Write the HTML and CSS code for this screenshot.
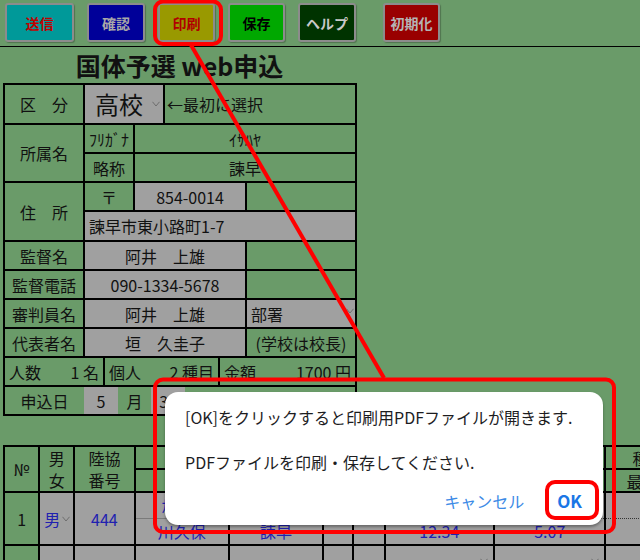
FILE: index.html
```html
<!DOCTYPE html>
<html lang="ja">
<head>
<meta charset="utf-8">
<title>国体予選 web申込</title>
<link rel="stylesheet" href="styles.css">
</head>
<body>
<div class="toolbar">
  <button class="btn btn-send">送信</button>
  <button class="btn btn-check">確認</button>
  <button class="btn btn-print">印刷</button>
  <button class="btn btn-save">保存</button>
  <button class="btn btn-help">ヘルプ</button>
  <button class="btn btn-reset">初期化</button>
</div>

<div class="form">
  <h1 class="title">国体予選 web申込</h1>
  <table class="info">
    <colgroup>
      <col class="w80"><col class="w20"><col class="w14"><col class="w16"><col class="w17"><col class="w13"><col class="w21"><col class="w34"><col class="w27"><col class="w110">
    </colgroup>
    <tr class="r-kubun">
      <th class="lbl">区　分</th>
      <td colspan="5" class="gray sel big">高校<svg class="chev" viewBox="0 0 8 6"><path d="M0.5 0.8 L4 5 L7.5 0.8"/></svg></td>
      <td colspan="4" class="note">←最初に選択</td>
    </tr>
    <tr>
      <th rowspan="2" class="lbl">所属名</th>
      <th colspan="3" class="lbl">ﾌﾘｶﾞﾅ</th>
      <td colspan="6" class="ctr">ｲｻﾊﾔ</td>
    </tr>
    <tr>
      <th colspan="3" class="lbl">略称</th>
      <td colspan="6" class="ctr">諫早</td>
    </tr>
    <tr>
      <th rowspan="2" class="lbl">住　所</th>
      <th colspan="3" class="lbl">〒</th>
      <td colspan="5" class="gray ctr">854-0014</td>
      <td></td>
    </tr>
    <tr class="r-addr">
      <td colspan="9" class="gray">諫早市東小路町1-7</td>
    </tr>
    <tr>
      <th class="lbl">監督名</th>
      <td colspan="8" class="gray ctr">阿井　上雄</td>
      <td></td>
    </tr>
    <tr>
      <th class="lbl">監督電話</th>
      <td colspan="8" class="gray ctr">090-1334-5678</td>
      <td></td>
    </tr>
    <tr>
      <th class="lbl">審判員名</th>
      <td colspan="8" class="gray ctr">阿井　上雄</td>
      <td class="gray sel">部署<svg class="chev chev-sm" viewBox="0 0 8 6"><path d="M0.5 0.8 L4 5 L7.5 0.8"/></svg></td>
    </tr>
    <tr>
      <th class="lbl">代表者名</th>
      <td colspan="8" class="gray ctr">垣　久圭子</td>
      <td class="ctr">(学校は校長)</td>
    </tr>
    <tr class="r-sum">
      <td colspan="2"><div class="pair"><span>人数</span><span>1 名</span></div></td>
      <td colspan="6"><div class="pair"><span>個人</span><span>2 種目</span></div></td>
      <td colspan="2"><div class="pair"><span>金額</span><span>1700 円</span></div></td>
    </tr>
    <tr class="r-date">
      <th class="lbl">申込日</th>
      <td colspan="2" class="gray ctr">5</td>
      <td colspan="2" class="ctr">月</td>
      <td colspan="2" class="gray ctr">30</td>
      <td class="ctr"></td>
      <td colspan="2"></td>
    </tr>
  </table>
</div>

<table class="entries">
  <colgroup>
    <col class="w35"><col class="w35"><col class="w60"><col class="w94"><col class="w94"><col class="w30"><col class="w31"><col class="w109"><col class="w111"><col class="w100">
  </colgroup>
  <tr class="h-top">
    <th rowspan="2">№</th>
    <th rowspan="2" class="two">男<br>女</th>
    <th rowspan="2" class="two">陸協<br>番号</th>
    <th colspan="2"></th>
    <th rowspan="2"></th>
    <th rowspan="2"></th>
    <th></th>
    <th></th>
    <th class="far">種目③</th>
  </tr>
  <tr class="h-bot">
    <th></th>
    <th></th>
    <th></th>
    <th></th>
    <th class="far2">最高記録</th>
  </tr>
  <tr class="row">
    <th class="no">1</th>
    <td class="gray blue sex">男<svg class="chev" viewBox="0 0 8 6"><path d="M0.5 0.8 L4 5 L7.5 0.8"/></svg></td>
    <td class="gray blue ctr">444</td>
    <td class="gray blue split"><div class="top">ｶﾜｸﾎﾞ</div><div class="bot">川久保</div></td>
    <td class="gray blue split team"><div class="top"></div><div class="bot">諫早</div></td>
    <td class="gray"></td>
    <td class="gray"></td>
    <td class="gray blue split ev"><div class="top"></div><div class="bot">12.34</div></td>
    <td class="gray blue split ev"><div class="top"></div><div class="bot">5.07</div></td>
    <td class="gray blue split ev"><div class="top"></div><div class="bot"></div></td>
  </tr>
  <tr class="row">
    <th class="no">2</th>
    <td class="gray"></td>
    <td class="gray"></td>
    <td class="gray"></td>
    <td class="gray team"></td>
    <td class="gray"></td>
    <td class="gray"></td>
    <td class="gray split ev"><div class="top"><svg class="chev" viewBox="0 0 8 6"><path d="M0.5 0.8 L4 5 L7.5 0.8"/></svg></div><div class="bot"></div></td>
    <td class="gray split ev"><div class="top"><svg class="chev" viewBox="0 0 8 6"><path d="M0.5 0.8 L4 5 L7.5 0.8"/></svg></div><div class="bot"></div></td>
    <td class="gray split ev"><div class="top"></div><div class="bot"></div></td>
  </tr>
</table>

<div class="alert" role="alertdialog">
  <p class="alert-msg">[OK]をクリックすると印刷用PDFファイルが開きます.</p>
  <p class="alert-msg">PDFファイルを印刷・保存してください.</p>
  <div class="alert-actions">
    <button class="alert-btn">キャンセル</button>
    <button class="alert-btn alert-ok">OK</button>
  </div>
</div>

<svg class="marks" viewBox="0 0 640 560" width="640" height="560">
  <rect x="155" y="1.5" width="66" height="42.5" rx="8"/>
  <line x1="191" y1="45" x2="384" y2="378"/>
  <rect x="155" y="379.5" width="459" height="152.5" rx="8"/>
  <rect x="547" y="482" width="50" height="36" rx="8"/>
</svg>
</body>
</html>
```
FILE: styles.css
```css
html, body {
  margin: 0;
  height: 560px;
  overflow: hidden;
}
body {
  position: relative;
  background: #6a9b69;
  font-family: "Noto Sans CJK JP", "Noto Sans", sans-serif;
  color: #111;
}

/* toolbar */
.toolbar {
  display: flex;
  align-items: flex-start;
  gap: 13px;
  height: 43px;
  padding: 3px 0 0 5px;
  border-bottom: 1px solid #000;
}
.btn {
  width: 57px;
  height: 39px;
  padding: 0;
  border: 2px solid #8c8c8c;
  border-radius: 3px;
  box-shadow: 1px 1px 1px rgba(0, 0, 0, 0.25);
  font-family: "Noto Sans CJK JP", sans-serif;
  font-size: 14px;
  font-weight: 700;
}
.btn-send { width: 69px; background: #009999; color: #c00000; }
.btn-check { width: 58px; background: #000099; color: #a8a8a8; }
.btn-print { background: #999900; color: #b00000; }
.btn-save { background: #00a800; color: #000; }
.btn-help { width: 58px; background: #003300; color: #c8c8c8; }
.btn-reset { margin-left: 14px; background: #990000; color: #b4b4b4; }

/* form */
.form {
  width: 353px;
  margin-left: 3px;
}
.title {
  margin: 0;
  height: 36px;
  line-height: 36px;
  text-align: center;
  font-size: 25px;
  font-weight: 700;
}

.info, .entries {
  border-collapse: collapse;
  table-layout: fixed;
  font-size: 16px;
}
.info { width: 354px; }
.info td, .info th, .entries td, .entries th {
  border: 2px solid #000;
  padding: 0 4px;
  font-weight: 400;
  line-height: 20px;
  white-space: nowrap;
  overflow: hidden;
  text-align: left;
}
.info tr { height: 29px; }
.info tr.r-kubun { height: 40px; }
.info tr.r-addr { height: 30px; }
.info .lbl { text-align: center; padding: 0; }
.ctr { text-align: center !important; }
.gray { background: #a0a0a0; }
.sel { position: relative; }
.big { font-size: 24px; padding-left: 10px !important; }
.note { padding-left: 2px !important; }
.chev {
  position: absolute;
  right: 3px;
  top: 50%;
  width: 8px;
  height: 6px;
  margin-top: -3px;
  fill: none;
  stroke: #6e6e6e;
  stroke-width: 1;
}
.chev-sm { right: 1px; top: 40%; }
.pair {
  display: flex;
  justify-content: space-between;
}
.r-date > * + * { border-left-style: hidden !important; }

.w80 { width: 80px; } .w20 { width: 20px; } .w14 { width: 14px; } .w16 { width: 16px; }
.w17 { width: 17px; } .w13 { width: 13px; } .w21 { width: 21px; } .w34 { width: 34px; }
.w27 { width: 27px; } .w110 { width: 110px; }

/* entries */
.entries {
  margin: 29px 0 0 3px;
  width: 704px;
}
.w35 { width: 35px; } .w60 { width: 60px; } .w94 { width: 94px; } .w30 { width: 30px; }
.w31 { width: 31px; } .w109 { width: 109px; } .w111 { width: 111px; } .w100 { width: 100px; }
.entries th {
  background: #6a9b69;
  text-align: center;
  padding: 0;
  line-height: 22px;
}
.entries .h-top, .entries .h-bot { height: 22px; }
.entries .h-top th, .entries .h-bot th { line-height: 20px; }
.entries .h-top th.two { line-height: 22px; }
.entries .far { text-align: left; padding-left: 26px; }
.entries .far2 { text-align: left; padding-left: 20px; }
.entries tr.row { height: 51px; }
.entries .no { text-align: center; }
.blue { color: #2020b0; }
.sex { position: relative; padding-left: 6px; }
.split { padding: 0 !important; vertical-align: top; }
.split .top, .split .bot {
  position: relative;
  height: 25px;
  line-height: 25px;
  text-align: center;
}
.split .top { border-bottom: 1px solid #7a7a7a; }
.ev .top { border-bottom: 1px dotted #333; }
.entries td.team { border-left: 1px solid #707070; }
.ev .chev { right: 5px; top: 12px; margin-top: 0; }

/* alert */
.alert {
  position: absolute;
  left: 165px;
  top: 392px;
  width: 438px;
  height: 133px;
  box-sizing: border-box;
  padding: 14px 21px 0 20px;
  background: #fff;
  border-radius: 13px;
  box-shadow: 0 2px 3px rgba(0, 0, 0, 0.35);
}
.alert-msg {
  margin: 0;
  font-size: 16px;
  line-height: 22px;
  color: #1d1d1f;
  white-space: nowrap;
}
.alert-msg + .alert-msg { margin-top: 23px; }
.alert-actions {
  display: flex;
  justify-content: flex-end;
  align-items: center;
  gap: 33px;
  margin-top: 17px;
}
.alert-btn {
  padding: 0;
  border: 0;
  background: none;
  font-family: "Noto Sans CJK JP", sans-serif;
  font-size: 16px;
  line-height: 22px;
  color: #3c8ae6;
}
.alert-ok {
  font-size: 17px;
  font-weight: 700;
  color: #1a76e6;
}

/* annotation overlay */
.marks {
  position: absolute;
  left: 0;
  top: 0;
  pointer-events: none;
  fill: none;
  stroke: #ff0000;
  stroke-width: 4;
}
```
